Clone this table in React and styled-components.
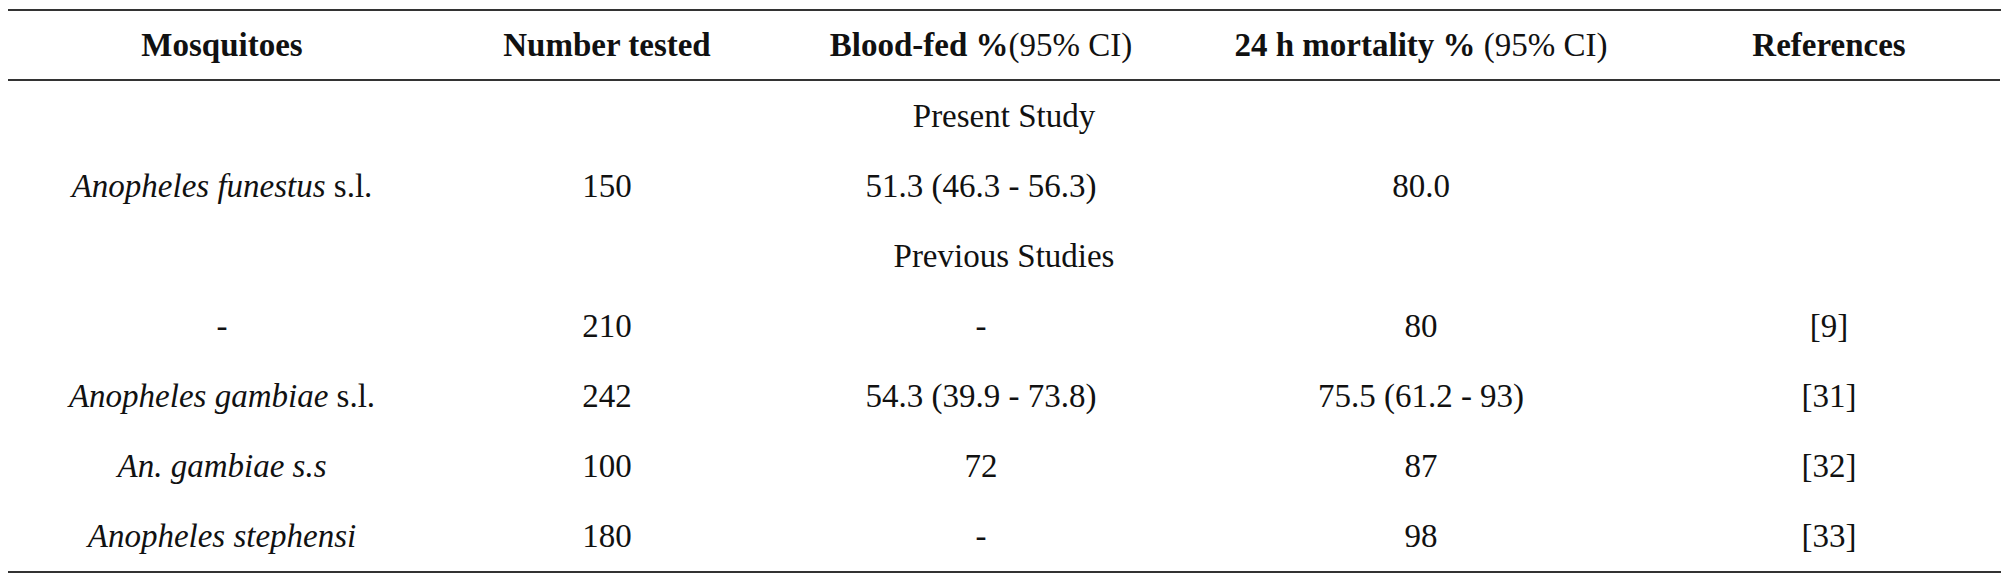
import React from 'react'
import styled, { createGlobalStyle } from 'styled-components'

const GlobalStyle = createGlobalStyle`
  html, body {
    margin: 0;
    padding: 0;
    background: #fff;
  }
`

const Page = styled.div`
  padding: 9px 1px 0 8px;
  width: 2002px;
  box-sizing: border-box;
`

const Table = styled.div`
  display: grid;
  grid-template-columns: 428px 342px 406px 474px 342px;
  border-top: 2px solid #333;
  border-bottom: 2px solid #333;
  color: #111;
  font-family: "Liberation Serif", "Times New Roman", Times, serif;
  font-size: 33px;
  line-height: 1;
`

const HeadCell = styled.div`
  display: flex;
  align-items: center;
  justify-content: center;
  height: 68px;
  border-bottom: 2px solid #333;
  font-weight: 700;
  white-space: pre;
`

const Plain = styled.span`
  font-weight: 400;
`

const Cell = styled.div`
  display: flex;
  align-items: center;
  justify-content: center;
  height: 70px;
  white-space: pre;
`

const SectionRow = styled(Cell)`
  grid-column: 1 / -1;
`

const Species = styled.i`
  font-style: italic;
`

const present = [
  { name: <span><Species>Anopheles funestus</Species> s.l.</span>, n: '150', fed: '51.3 (46.3 - 56.3)', mort: '80.0', ref: '' },
]

const previous = [
  { name: '-', n: '210', fed: '-', mort: '80', ref: '[9]' },
  { name: <span><Species>Anopheles gambiae</Species> s.l.</span>, n: '242', fed: '54.3 (39.9 - 73.8)', mort: '75.5 (61.2 - 93)', ref: '[31]' },
  { name: <Species>An. gambiae s.s</Species>, n: '100', fed: '72', mort: '87', ref: '[32]' },
  { name: <Species>Anopheles stephensi</Species>, n: '180', fed: '-', mort: '98', ref: '[33]' },
]

const DataRow = ({ row }) => (
  <>
    <Cell>{row.name}</Cell>
    <Cell>{row.n}</Cell>
    <Cell>{row.fed}</Cell>
    <Cell>{row.mort}</Cell>
    <Cell>{row.ref}</Cell>
  </>
)

export default function App() {
  return (
    <Page>
      <GlobalStyle />
      <Table>
        <HeadCell>Mosquitoes</HeadCell>
        <HeadCell>Number tested</HeadCell>
        <HeadCell><span>Blood-fed %<Plain>(95% CI)</Plain></span></HeadCell>
        <HeadCell><span>24 h mortality % <Plain>(95% CI)</Plain></span></HeadCell>
        <HeadCell>References</HeadCell>

        <SectionRow>Present Study</SectionRow>
        {present.map((row, i) => <DataRow key={'p' + i} row={row} />)}

        <SectionRow>Previous Studies</SectionRow>
        {previous.map((row, i) => <DataRow key={'q' + i} row={row} />)}
      </Table>
    </Page>
  )
}
